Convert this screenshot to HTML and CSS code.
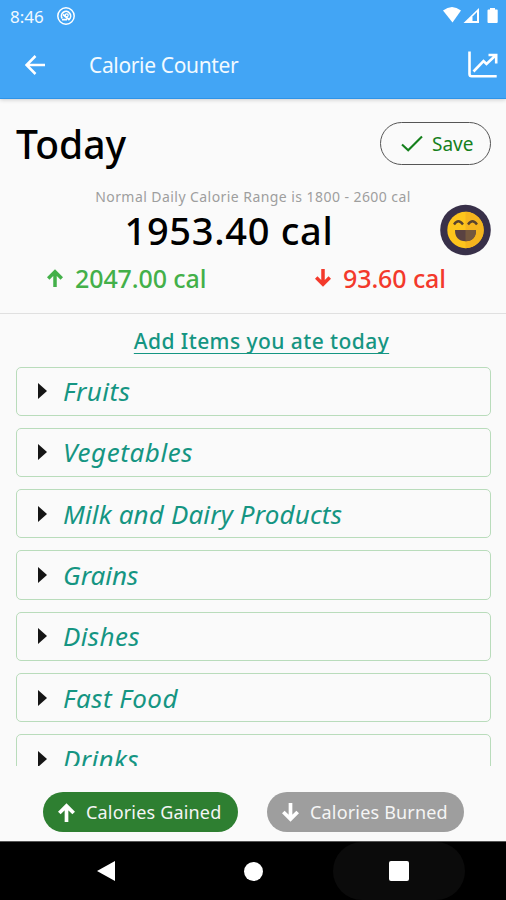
FILE: index.html
```html
<!DOCTYPE html>
<html lang="en">
<head>
<meta charset="utf-8">
<title>Calorie Counter</title>
<link rel="stylesheet" href="styles.css">
</head>
<body>
<div class="screen">
  <header class="top">
    <div class="status">
      <span class="clock">8:46</span>
      <svg class="status-app" width="20" height="20" viewBox="0 0 20 20" fill="none" stroke="#fff"><circle cx="10" cy="10" r="8.200" stroke-width="1.500"/><path d="M6.200 12.500A4.600 4.600 0 1 1 13 13.500" stroke-width="1.700"/><path d="M7 8.500L13.500 14M6 13.600H11" stroke-width="1.700"/><circle cx="10.700" cy="9.300" r="1.500" stroke-width="1.300"/></svg>
      <svg class="status-icons" width="56" height="18" viewBox="0 0 56 18"><path d="M0 3.500Q9 -3.500 18 3.500L9.500 15.500Z" fill="#fff"/><path d="M20.500 16L36 1V16Z" fill="#fff"/><path d="M29.500 9.500L34 5V14H29.500Z" fill="#42a5f5"/><path d="M47 1H52V2.500H54Q54.700 2.500 54.700 3.500V15Q54.700 16 53.700 16H45.500Q44.500 16 44.500 15V3.500Q44.500 2.500 45.500 2.500H47Z" fill="#fff"/></svg>
    </div>
    <div class="appbar">
      <svg class="back" width="20" height="20" viewBox="0 0 20 20" fill="none" stroke="#fff" stroke-width="2.500"><path d="M20 10H2M10.500 1L1.600 10L10.500 19"/></svg>
      <h1 class="title">Calorie Counter</h1>
      <svg class="chart" width="30" height="28" viewBox="0 0 30 28" fill="none" stroke="#fff" stroke-width="2.600"><path d="M1.500 .500V23Q1.500 25.200 3.700 25.200H28.700"/><path d="M5.500 20.500L15.500 10L18.500 13L27.500 4.500M20.500 4H28.200V12.500"/></svg>
    </div>
  </header>
  <section class="summary">
    <div class="heading-row">
      <h2 class="today">Today</h2>
      <button class="save"><svg width="22" height="17" viewBox="0 0 22 17" fill="none" stroke="#15801c" stroke-width="2.100"><path d="M1 9.500L7.200 15.300L21 1.500"/></svg><span>Save</span></button>
    </div>
    <div class="totals">
      <div class="readout"><p class="range">Normal Daily Calorie Range is 1800 - 2600 cal</p><p class="net">1953.40 cal</p></div>
      <svg class="face" width="51" height="52" viewBox="0 0 51 52"><circle cx="25.500" cy="26" r="25.300" fill="#383049"/><circle cx="25.500" cy="26" r="18.200" fill="#fdc51c"/><path d="M25.500 7.800A18.200 18.200 0 0 1 25.500 44.200Z" fill="#f5b51e"/><path d="M15 26H36Q36 37 25.500 37.200Q15 37 15 26Z" fill="#5a4241"/><path d="M25.500 26H36Q36 37 25.500 37.200Z" fill="#75583e"/><path d="M14 20.500Q18.300 14 23 20.500M28 20.500Q32.500 14 37 20.500" fill="none" stroke="#59432e" stroke-width="2.300"/></svg>
    </div>
    <div class="balance">
      <div class="gain"><svg width="16" height="18" viewBox="0 0 16 18" fill="none" stroke="currentColor" stroke-width="3.500"><path d="M8 18V2.500M1.200 9.500L8 2.700L14.800 9.500"/></svg><span>2047.00 cal</span></div>
      <div class="burn"><svg width="16" height="18" viewBox="0 0 16 18" fill="none" stroke="currentColor" stroke-width="3.500"><path d="M8 0V15.500M1.200 8.500L8 15.300L14.800 8.500"/></svg><span>93.60 cal</span></div>
    </div>
  </section>
  <main class="foods">
    <h3 class="prompt"><span>Add Items you ate today</span></h3>
    <ul class="list">
      <li class="item"><i class="tri"></i><span class="fruits">Fruits</span></li>
      <li class="item"><i class="tri"></i><span class="vegetables">Vegetables</span></li>
      <li class="item"><i class="tri"></i><span class="milk">Milk and Dairy Products</span></li>
      <li class="item"><i class="tri"></i><span class="grains">Grains</span></li>
      <li class="item"><i class="tri"></i><span class="dishes">Dishes</span></li>
      <li class="item"><i class="tri"></i><span class="fast">Fast Food</span></li>
      <li class="item"><i class="tri"></i><span class="drinks">Drinks</span></li>
    </ul>
  </main>
  <div class="actions">
    <button class="pill gained"><svg width="17" height="19" viewBox="0 0 16 18" fill="none" stroke="#fff" stroke-width="3.500"><path d="M8 18V2.500M1.200 9.500L8 2.700L14.800 9.500"/></svg><span>Calories Gained</span></button>
    <button class="pill burned"><svg width="17" height="19" viewBox="0 0 16 18" fill="none" stroke="#fff" stroke-width="3.500"><path d="M8 0V15.500M1.200 8.500L8 15.300L14.800 8.500"/></svg><span>Calories Burned</span></button>
  </div>
  <nav class="nav">
    <div class="key"><svg width="19" height="22" viewBox="0 0 19 22"><path d="M0 11L18 1V21Z" fill="#fff"/></svg></div>
    <div class="key"><i class="home"></i></div>
    <div class="key pressed"><i class="recent"></i></div>
  </nav>
</div>
</body>
</html>
```
FILE: styles.css
```css
* { box-sizing: border-box; margin: 0; padding: 0; }
body { width: 506px; height: 900px; overflow: hidden; background: #fafafa; font-family: "Noto Sans", sans-serif; }
svg { display: block; flex: none; }
button { background: none; border: 0; font: inherit; }
span, h1, h2, p { white-space: nowrap; }
.screen { display: flex; flex-direction: column; height: 900px; }

.top { height: 99px; flex: none; background: #42a5f5; border-bottom: 1px solid #2e94e8; color: #f2faff; box-shadow: 0 1px 4px rgba(0,0,0,.18); }
.status { display: flex; height: 32px; align-items: center; padding: 0 7px 0 10px; }
.clock { width: 46px; font-size: 17px; letter-spacing: 0; }
.status-icons { margin-left: auto; }
.appbar { display: flex; height: 66px; align-items: center; padding: 0 8px 0 25px; }
.title { margin-left: 44px; margin-top: -1px; font-size: 21px; font-weight: 400; letter-spacing: -.35px; }
.chart { margin-left: auto; }

.summary { height: 214.500px; flex: none; border-bottom: 1.500px solid #e0e0e0; padding: 23px 15px 0 16px; }
.heading-row { display: flex; height: 43px; align-items: center; justify-content: space-between; }
.today { font-size: 39px; line-height: 43px; font-weight: 500; color: #000; }
.save { display: flex; align-items: center; width: 111px; height: 43px; border: 1px solid #555; border-radius: 22px; padding-left: 20px; gap: 9px; font-size: 19px; color: #15801c; }
.totals { display: flex; height: 92px; padding-top: 22px; }
.readout { width: 426px; text-align: center; padding-left: 50px; display: flex; flex-direction: column; align-items: center; }
.range { font-size: 14px; line-height: 20px; color: #9e9e9e; letter-spacing: .44px; }
.net { font-size: 38px; line-height: 46px; font-weight: 500; color: #000; margin-right: 48px; letter-spacing: .7px; }
.face { margin-top: 17px; }
.balance { display: flex; height: 44px; align-items: center; font-size: 25px; font-weight: 500; margin-top: -1px; letter-spacing: -.1px; }
.gain, .burn { display: flex; align-items: center; gap: 12px; }
.gain { color: #43b049; padding-left: 31px; width: 299px; }
.burn { color: #f3392b; }

.foods { height: 452.500px; flex: none; overflow: hidden; padding: 9px 15px 0 16px; }
.prompt { height: 44px; padding-left: 16px; text-align: center; color: #159582; font-size: 21px; line-height: 36px; font-weight: 500; letter-spacing: .43px; }
.prompt span { text-decoration: underline; text-decoration-thickness: 1px; text-underline-offset: 4px; text-decoration-skip-ink: none; }
.list { list-style: none; display: grid; gap: 12px; }
.item { display: flex; align-items: center; height: 49.33px; border: 1.5px solid #b9dcbb; border-radius: 5px; padding-left: 21px; color: #159582; font-size: 26px; font-style: italic; }
.tri { width: 0; height: 0; border-left: 9px solid #151515; border-top: 8px solid transparent; border-bottom: 8px solid transparent; margin-right: 16px; }
.fruits { letter-spacing: .5px; }
.vegetables { letter-spacing: .6px; }
.milk { letter-spacing: .15px; }
.dishes, .drinks { letter-spacing: .4px; }
.fast { letter-spacing: .5px; }

.actions { height: 75px; flex: none; display: flex; gap: 29px; padding: 26px 0 0 43px; }
.pill { display: flex; align-items: center; height: 40px; border-radius: 20px; color: #f5f5f5; font-size: 18px; padding-left: 15px; gap: 11px; letter-spacing: .18px; }
.gained { width: 195px; background: #2e7f31; }
.burned { width: 197px; background: #9e9e9e; }
.nav { flex: 1; background: #000; border-top: 1px solid #555; display: grid; grid-template-columns: 132px 132px 132px; column-gap: 14.500px; padding-left: 40px; }
.key { display: flex; align-items: center; justify-content: center; border-radius: 30px; }
.pressed { background: #0b0b0b; }
.home { width: 19px; height: 19px; border-radius: 50%; background: #fff; margin-left: 2px; }
.recent { width: 20px; height: 20px; border-radius: 2px; background: #fff; }
```
